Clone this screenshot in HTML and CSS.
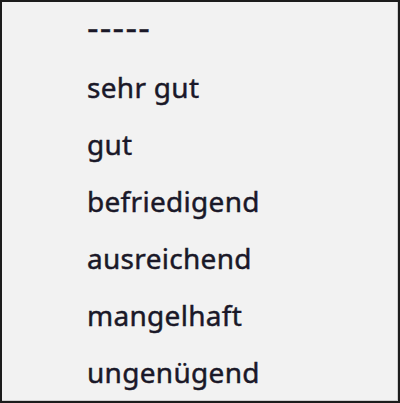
FILE: index.html
```html
<!DOCTYPE html>
<html>
<head>
<meta charset="utf-8">
<link rel="stylesheet" href="styles.css">
</head>
<body>
<div class="frame">
  <ul class="list">
    <li class="item dashes">-----</li>
    <li class="item">sehr gut</li>
    <li class="item">gut</li>
    <li class="item">befriedigend</li>
    <li class="item">ausreichend</li>
    <li class="item">mangelhaft</li>
    <li class="item">ungenügend</li>
  </ul>
</div>
</body>
</html>
```
FILE: styles.css
```css
html, body {
  margin: 0;
  padding: 0;
  background: #f2f2f2;
}
.frame {
  box-sizing: border-box;
  width: 400px;
  height: 403px;
  border: 2px solid #1c1c1c;
  box-shadow: inset -1px -1px 0 #cfcfcf;
  background: #f2f2f2;
  overflow: hidden;
}
.list {
  list-style: none;
  margin: 0;
  padding: 0 0 0 85px;
}
.item {
  font-family: "Noto Sans", "Open Sans", sans-serif;
  font-size: 28px;
  line-height: 57px;
  height: 57px;
  color: #1a1828;
  -webkit-text-stroke: 0.45px #1a1828;
  letter-spacing: 0.3px;
}
.dashes {
  font-size: 36px;
  letter-spacing: 1.2px;
  line-height: 49px;
  height: 49px;
  padding-bottom: 8px;
  -webkit-text-stroke: 0.3px #1a1828;
}
```
